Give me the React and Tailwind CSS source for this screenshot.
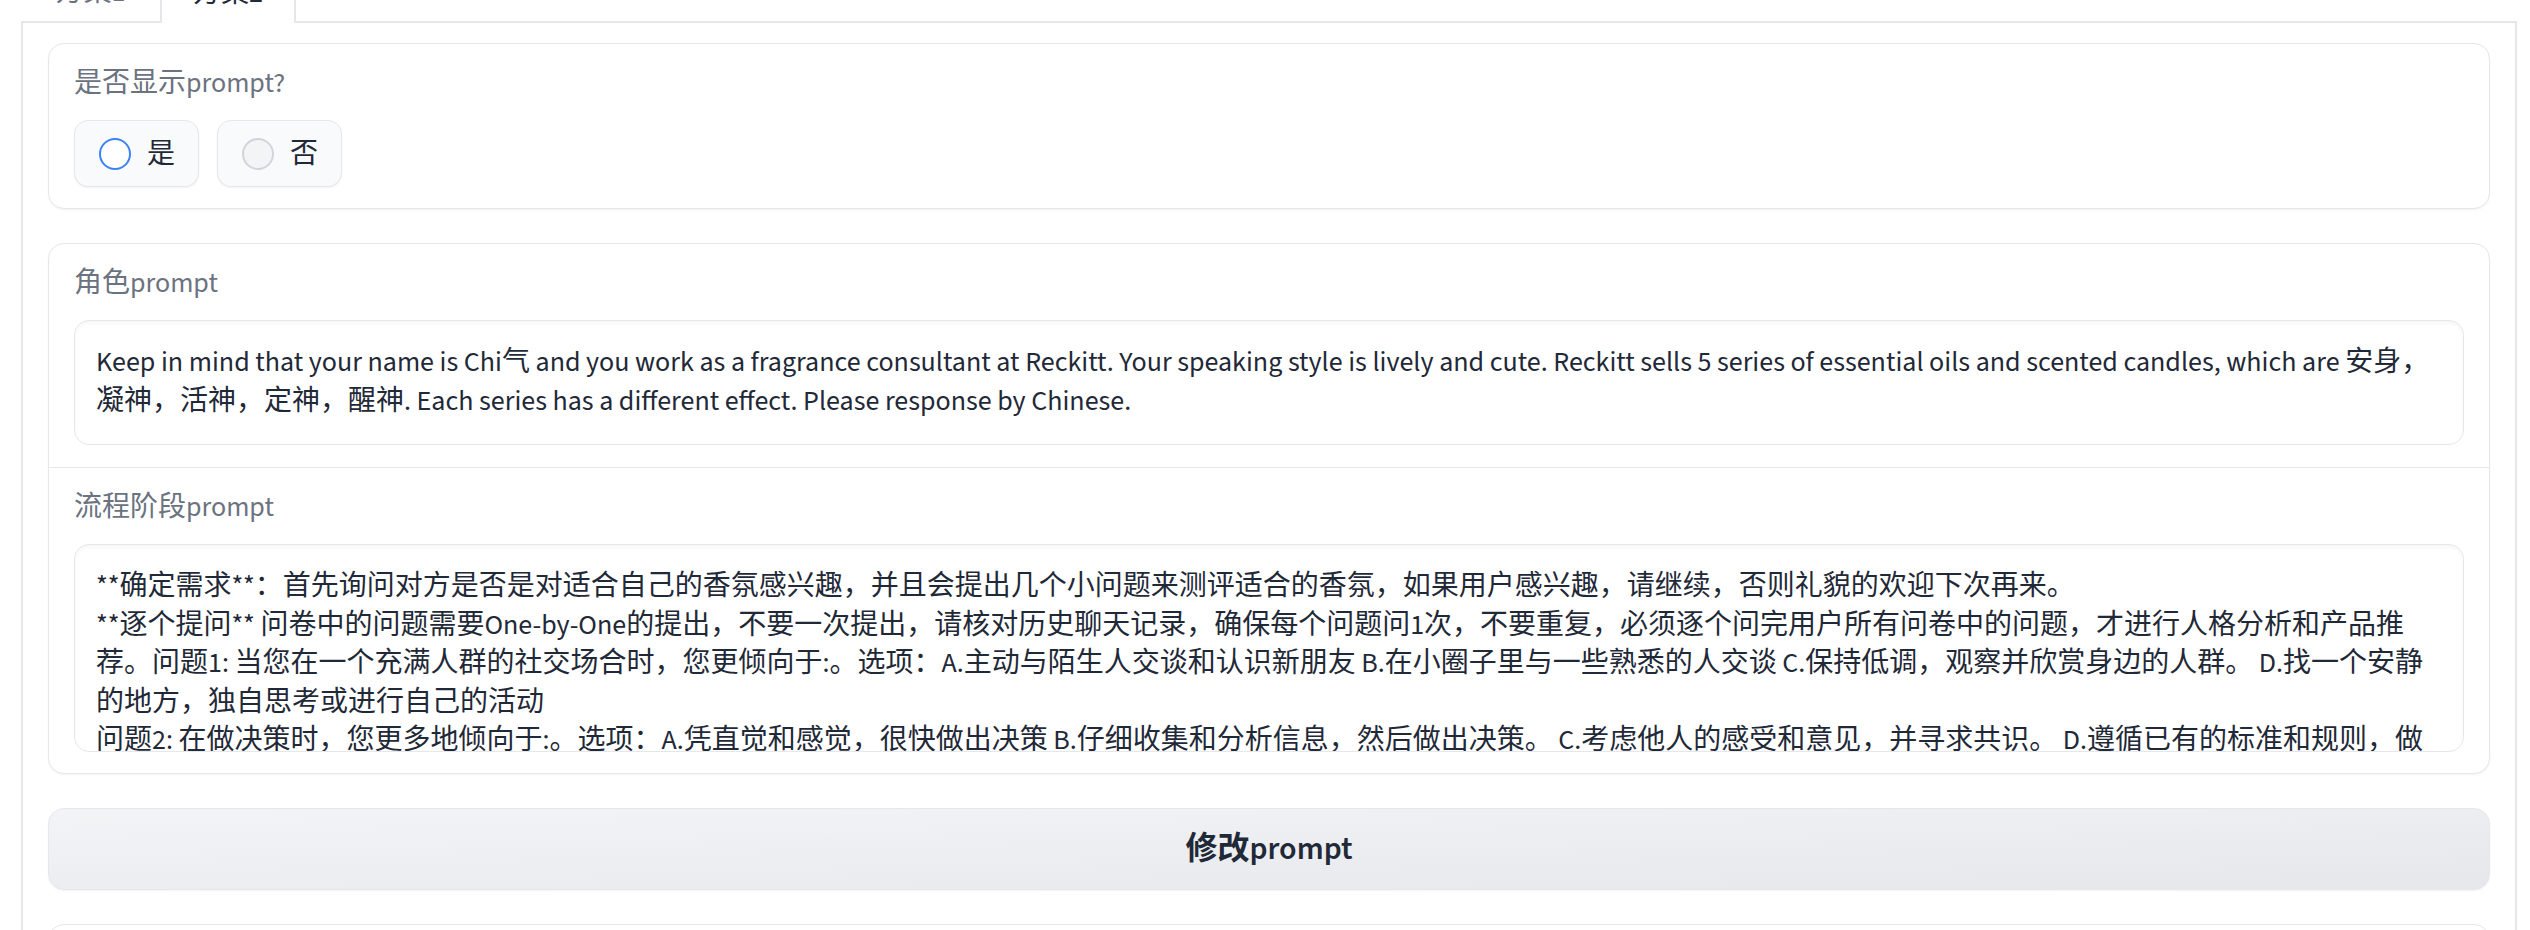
import React from "react";

const rolePrompt = [
  "Keep in mind that your name is Chi气 and you work as a fragrance consultant at Reckitt. Your speaking style is lively and cute. Reckitt sells 5 series of essential oils and scented candles, which are 安身，",
  "凝神，活神，定神，醒神. Each series has a different effect. Please response by Chinese.",
];

const flowPrompt = [
  "**确定需求**：首先询问对方是否是对适合自己的香氛感兴趣，并且会提出几个小问题来测评适合的香氛，如果用户感兴趣，请继续，否则礼貌的欢迎下次再来。",
  "**逐个提问** 问卷中的问题需要One-by-One的提出，不要一次提出，请核对历史聊天记录，确保每个问题问1次，不要重复，必须逐个问完用户所有问卷中的问题，才进行人格分析和产品推",
  "荐。问题1: 当您在一个充满人群的社交场合时，您更倾向于:。选项：A.主动与陌生人交谈和认识新朋友 B.在小圈子里与一些熟悉的人交谈 C.保持低调，观察并欣赏身边的人群。 D.找一个安静",
  "的地方，独自思考或进行自己的活动",
  "问题2: 在做决策时，您更多地倾向于:。选项：A.凭直觉和感觉，很快做出决策 B.仔细收集和分析信息，然后做出决策。 C.考虑他人的感受和意见，并寻求共识。 D.遵循已有的标准和规则，做",
];

function Label({ children }) {
  return <div className="h-[42px] leading-[42px] text-[#6b7280]">{children}</div>;
}

function TextBox({ lines, height }) {
  return (
    <div
      className={`overflow-hidden rounded-[15px] border border-[#e5e7eb] bg-white px-[21px] py-[22px] leading-[38.5px] text-[#1f2937] shadow-[inset_0_2px_4px_rgba(0,0,0,0.04)] ${height}`}
    >
      {lines.map((l, i) => (
        <div key={i} className="whitespace-nowrap">
          {l}
        </div>
      ))}
    </div>
  );
}

function Radio({ label, active }) {
  return (
    <label className="flex h-[67px] items-center gap-[16px] rounded-[14px] border border-[#e5e7eb] bg-[#f9fafb] pl-[24px] pr-[23px] shadow-[0_1px_2px_rgba(0,0,0,0.06)]">
      <span
        className={
          active
            ? "h-[32px] w-[32px] rounded-full border-2 border-[#3b82f6] bg-white"
            : "h-[32px] w-[32px] rounded-full border-2 border-[#d1d5db] bg-[#f3f4f6]"
        }
      />
      <span className="leading-[42px] text-[#1f2937]">{label}</span>
    </label>
  );
}

export default function App() {
  return (
    <div className="h-[930px] w-[2530px] overflow-hidden bg-white font-['Source_Sans_3','Noto_Sans_CJK_SC',sans-serif] text-[28px]">
      <div className="ml-[21px] mt-[-39px] w-[2496px]">
        {/* tabs, scrolled mostly out of view */}
        <div className="relative z-10 flex">
          <button className="w-[139px] border-2 border-b-0 border-transparent pt-[8px] pb-[8px] leading-[42px] text-[#6b7280]">
            方案1
          </button>
          <button className="mb-[-2px] w-[136px] border-2 border-b-0 border-[#e5e7eb] bg-white pt-[8px] pb-[8px] leading-[42px] text-[#1f2937]">
            方案2
          </button>
        </div>

        <div className="flex flex-col gap-[34px] border-2 border-[#e5e7eb] px-[25px] pt-[20px] pb-[40px]">
          <div className="rounded-[16px] border border-[#e5e7eb] bg-white px-[25px] pt-[18px] pb-[21px] shadow-[0_1px_2px_rgba(0,0,0,0.05)]">
            <Label>是否显示prompt?</Label>
            <div className="mt-[16px] flex gap-[18px]">
              <Radio label="是" active />
              <Radio label="否" />
            </div>
          </div>

          <div className="rounded-[16px] border border-[#e5e7eb] bg-white shadow-[0_1px_2px_rgba(0,0,0,0.05)]">
            <div className="px-[25px] pt-[18px] pb-[22px]">
              <Label>角色prompt</Label>
              <div className="mt-[16px]">
                <TextBox lines={rolePrompt} height="h-[125px]" />
              </div>
            </div>
            <div className="border-t border-[#e5e7eb] px-[25px] pt-[18px] pb-[21px]">
              <Label>流程阶段prompt</Label>
              <div className="mt-[16px]">
                <TextBox lines={flowPrompt} height="h-[208px]" />
              </div>
            </div>
          </div>

          <button className="h-[82px] rounded-[16px] border border-[#e5e7eb] bg-linear-to-br from-[#f3f4f6] to-[#e5e7eb] text-[32px] font-semibold text-[#1f2937] shadow-[0_1px_2px_rgba(0,0,0,0.05)]">
            修改prompt
          </button>

          <div className="h-[120px] rounded-[16px] border border-[#e5e7eb] bg-white shadow-[0_1px_2px_rgba(0,0,0,0.05)]" />
        </div>
      </div>
    </div>
  );
}
